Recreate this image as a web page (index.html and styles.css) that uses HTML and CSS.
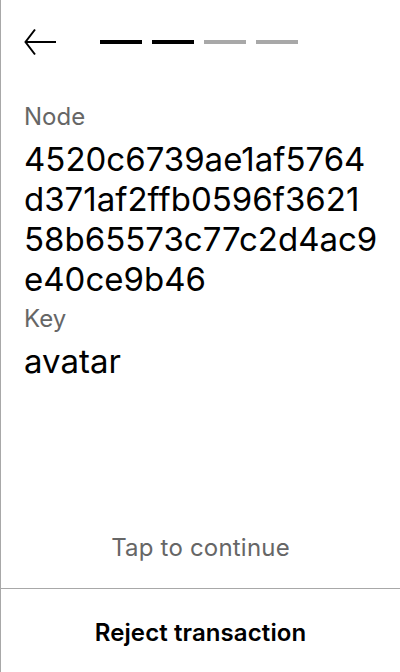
FILE: index.html
```html
<!DOCTYPE html>
<html lang="en">
<head>
<meta charset="utf-8">
<title>Confirm transaction</title>
<link rel="stylesheet" href="styles.css">
</head>
<body>
<div class="screen">
  <header class="header">
    <button class="back" aria-label="Back">
      <svg width="32" height="28" viewBox="0 0 32 28" fill="none" stroke="#000" stroke-width="2">
        <path d="M2 14H32"/>
        <path d="M11 1.5L1.5 14L11 26.5"/>
      </svg>
    </button>
    <div class="steps">
      <span class="step done"></span>
      <span class="step done"></span>
      <span class="step"></span>
      <span class="step"></span>
    </div>
  </header>
  <main class="content">
    <div class="label">Node</div>
    <div class="value hex">4520c6739ae1af5764d371af2ffb0596f362158b65573c77c2d4ac9e40ce9b46</div>
    <div class="label">Key</div>
    <div class="value">avatar</div>
  </main>
  <div class="tap">Tap to continue</div>
  <div class="footer">
    <button class="reject">Reject transaction</button>
  </div>
</div>
</body>
</html>
```
FILE: styles.css
```css
* { box-sizing: border-box; }
html, body { margin: 0; padding: 0; background: #fff; }
body { font-family: Inter, "Noto Sans", sans-serif; color: #000; }
.screen {
  height: 672px;
  display: flex;
  flex-direction: column;
  border-left: 1px solid #a8a8a8;
}
.header {
  display: flex;
  align-items: center;
  height: 48px;
  margin-top: 18px;
  padding-left: 23px;
}
.back {
  border: 0;
  background: none;
  padding: 0;
  width: 32px;
  height: 28px;
  display: flex;
}
.steps {
  display: flex;
  gap: 10px;
  margin-left: 44px;
}
.step {
  width: 42px;
  height: 4px;
  background: #a8a8a8;
}
.step.done { background: #000; }
.content {
  flex: 1;
  padding: 35px 21px 0 23px;
}
.label {
  font-size: 24px;
  line-height: 29px;
  color: #666;
  margin-top: 1px;
  margin-bottom: 8px;
}
.value {
  font-size: 33px;
  line-height: 40px;
  color: #000;
  margin-bottom: 5px;
}
.hex { overflow-wrap: anywhere; }
.tap {
  text-align: center;
  font-size: 24px;
  line-height: 29px;
  letter-spacing: 0.2px;
  color: #666;
  padding-bottom: 26px;
}
.footer {
  border-top: 1px solid #a8a8a8;
  height: 84px;
  display: flex;
}
.reject {
  flex: 1;
  border: 0;
  background: none;
  font-family: inherit;
  font-size: 24px;
  line-height: 29px;
  font-weight: 600;
  letter-spacing: 0.1px;
  color: #000;
  padding: 3px 0 0;
}
```
